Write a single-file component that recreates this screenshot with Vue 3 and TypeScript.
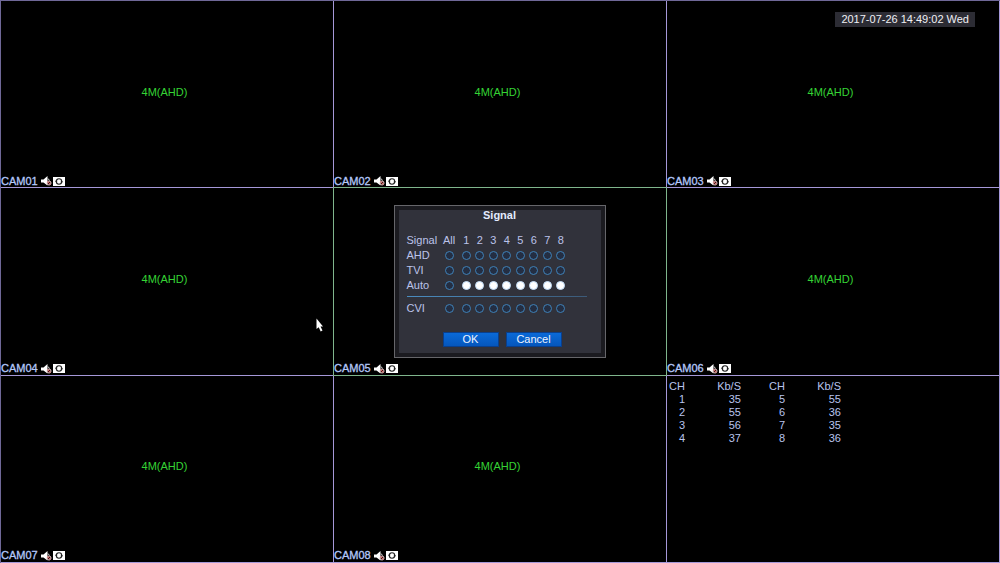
<script setup lang="ts">
import { reactive, ref } from 'vue'

interface Camera {
  name: string
  format: string | null
}

const cameras: Camera[] = [
  { name: 'CAM01', format: '4M(AHD)' },
  { name: 'CAM02', format: '4M(AHD)' },
  { name: 'CAM03', format: '4M(AHD)' },
  { name: 'CAM04', format: '4M(AHD)' },
  { name: 'CAM05', format: null },
  { name: 'CAM06', format: '4M(AHD)' },
  { name: 'CAM07', format: '4M(AHD)' },
  { name: 'CAM08', format: '4M(AHD)' },
]

const active = 'CAM05'
const channels = [1, 2, 3, 4, 5, 6, 7, 8]
const rates = [35, 55, 56, 37, 55, 36, 35, 36]
const rateRows = [0, 1, 2, 3]

const signals = ['AHD', 'TVI', 'Auto', 'CVI']
const choice = reactive<Record<number, string>>({})
channels.forEach((ch) => (choice[ch] = 'Auto'))
const all = ref('')
const open = ref(true)

function applyAll(signal: string) {
  channels.forEach((ch) => (choice[ch] = signal))
}
</script>

<template>
  <main class="wall">
    <section
      v-for="cam in cameras"
      :key="cam.name"
      class="cell"
      :class="{ active: cam.name === active }"
    >
      <p v-if="cam.format" class="format">{{ cam.format }}</p>
      <div class="tag">
        <span>{{ cam.name }}</span>
        <svg class="mute" width="11" height="10" viewBox="0 0 11 10" aria-hidden="true">
          <path d="M0 3.5h2.5L6.5 0v9.5L2.5 6.5H0z" fill="#fff" />
          <path d="M7 2.5l1.5 2" stroke="#ddd" stroke-width="1" />
          <circle cx="8" cy="7" r="2" fill="#3a1a1a" stroke="#f0c8c8" stroke-width="1" />
          <path d="M6.5 5.5l3 3" stroke="#d66" stroke-width="1" />
        </svg>
        <svg class="rec" width="12" height="9" viewBox="0 0 12 9" aria-hidden="true">
          <path d="M0 0h12v9H0z" fill="#fff" />
          <circle cx="6" cy="4.5" r="2.7" fill="none" stroke="#222" stroke-width="1.1" />
          <path d="M2.2 4.2h2M7.8 4.8h2" stroke="#222" stroke-width="1" />
        </svg>
      </div>
    </section>

    <section class="cell stats">
      <table>
        <thead>
          <tr><th>CH</th><th>Kb/S</th><th>CH</th><th>Kb/S</th></tr>
        </thead>
        <tbody>
          <tr v-for="i in rateRows" :key="i">
            <td>{{ i + 1 }}</td>
            <td>{{ rates[i] }}</td>
            <td>{{ i + 5 }}</td>
            <td>{{ rates[i + 4] }}</td>
          </tr>
        </tbody>
      </table>
    </section>

    <time class="clock" datetime="2017-07-26T14:49:02">2017-07-26 14:49:02 Wed</time>

    <div v-if="open" class="overlay">
      <form class="dialog" role="dialog" aria-labelledby="dialog-title" @submit.prevent="open = false">
        <h1 id="dialog-title">Signal</h1>
        <table class="matrix">
          <colgroup>
            <col class="col-label" />
            <col class="col-all" />
            <col v-for="ch in channels" :key="ch" />
            <col class="col-rest" />
          </colgroup>
          <thead>
            <tr>
              <th scope="col" class="label">Signal</th>
              <th scope="col">All</th>
              <th v-for="ch in channels" :key="ch" scope="col">{{ ch }}</th>
              <td></td>
            </tr>
          </thead>
          <tbody>
            <template v-for="signal in signals" :key="signal">
              <tr v-if="signal === 'CVI'" class="divider">
                <td colspan="11"><hr /></td>
              </tr>
              <tr>
                <th scope="row" class="label">{{ signal }}</th>
                <td>
                  <input
                    v-model="all"
                    type="radio"
                    name="all"
                    :value="signal"
                    :aria-label="`All channels ${signal}`"
                    @change="applyAll(signal)"
                  />
                </td>
                <td v-for="ch in channels" :key="ch">
                  <input
                    v-model="choice[ch]"
                    type="radio"
                    :name="`channel-${ch}`"
                    :value="signal"
                    :aria-label="`Channel ${ch} ${signal}`"
                  />
                </td>
                <td></td>
              </tr>
            </template>
          </tbody>
        </table>
        <div class="actions">
          <button type="submit">OK</button>
          <button type="button" @click="open = false">Cancel</button>
        </div>
      </form>
    </div>

    <svg class="pointer" width="9" height="14" viewBox="0 0 9 14" aria-hidden="true">
      <path d="M0.5 0.5v10.5l2.2-1.8 2 4.3 1.8-.9-2-4.1h2.5z" fill="#fff" />
    </svg>
  </main>
</template>

<style>
body {
  margin: 0;
  background: #000;
}
</style>

<style scoped>
.wall {
  position: relative;
  box-sizing: border-box;
  display: grid;
  grid-template-columns: repeat(3, 1fr);
  grid-template-rows: repeat(3, 1fr);
  min-height: 100vh;
  border-top: 1px solid #6f6898;
  border-left: 1px solid #6f6898;
  background: #000;
  color: #b9c4ee;
  font: 11px/13px "Liberation Sans", Arial, sans-serif;
}

.cell {
  position: relative;
  display: flex;
  flex-direction: column;
  border-right: 1px solid #a598d8;
  border-bottom: 1px solid #a598d8;
}

.cell.active::after {
  content: "";
  position: absolute;
  z-index: 1;
  inset: -1px;
  border: 1px solid #7fb58c;
}

.format {
  position: absolute;
  inset: 0 5px 4px 0;
  display: grid;
  place-items: center;
  margin: 0;
  color: #35d435;
}

.tag {
  display: flex;
  align-items: center;
  height: 12px;
  margin-top: auto;
  color: #b4c8fa;
  -webkit-text-stroke: 0.3px #b4c8fa;
}

.mute {
  margin-left: 3px;
}

.rec {
  margin-left: 1px;
}

table {
  border-collapse: collapse;
  table-layout: fixed;
}

th,
td {
  padding: 0;
  font-weight: normal;
}

.stats table {
  width: 174px;
  margin-top: 4px;
  text-align: right;
}

.stats th:nth-child(1) {
  width: 18px;
}

.stats th:nth-child(2),
.stats th:nth-child(4) {
  width: 56px;
}

.clock {
  position: absolute;
  top: 11px;
  right: 25px;
  padding: 1px 6px;
  background: #2c2c34;
  color: #f0f0f4;
}

.overlay {
  position: absolute;
  z-index: 2;
  inset: 0;
  display: grid;
  place-items: center;
  padding: 0 2px 2px 0;
}

.dialog {
  box-sizing: border-box;
  width: 212px;
  padding: 3px 12px 10px;
  border: 1px solid #66666a;
  background: #31323b;
  box-shadow: inset 0 0 0 4px #1b1b20;
  color: #bcc3ea;
}

h1 {
  margin: 0 0 12px;
  color: #e4ecff;
  font-size: 11px;
  line-height: 13px;
  text-align: center;
}

.matrix {
  width: 180px;
  text-align: center;
}

.matrix tr {
  height: 15px;
}

.matrix thead tr {
  height: 14px;
}

.matrix .divider {
  height: 8px;
}

.col-label {
  width: 32px;
}

.col-all {
  width: 21px;
}

.col-rest {
  width: 19px;
}

.matrix .label {
  text-align: left;
}

hr {
  height: 1px;
  margin: 0;
  border: 0;
  background: linear-gradient(90deg, #4a8cc0, #3c5a78);
}

input {
  appearance: none;
  display: block;
  box-sizing: border-box;
  width: 9px;
  height: 9px;
  margin: 0 auto;
  border: 1px solid #3f82b8;
  border-radius: 50%;
  background: #242e42;
}

input:checked {
  border-color: #c0dcf8;
  background: #fff;
}

.actions {
  display: flex;
  gap: 7px;
  margin: 16px 0 0 36px;
}

button {
  width: 56px;
  height: 15px;
  padding: 0;
  border: 1px solid #0a3f8c;
  background: linear-gradient(#0a6ad8, #0556bc);
  color: #eef4ff;
  font: inherit;
  line-height: 13px;
}

.pointer {
  position: absolute;
  top: 317px;
  left: 315px;
}
</style>
